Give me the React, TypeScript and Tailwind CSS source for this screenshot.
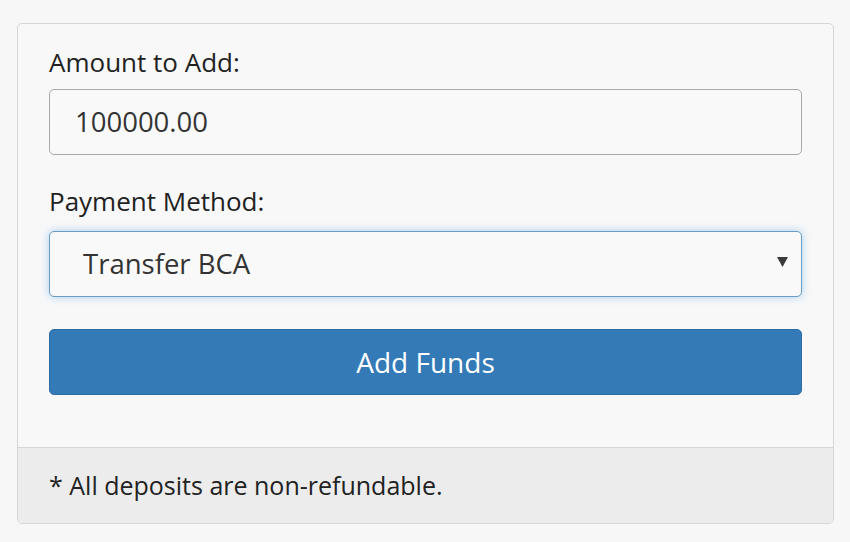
export default function App() {
  return (
    <div className="min-h-[542px] bg-[#f7f7f7] pt-[23px] pl-[17px] pr-[16px] pb-[18px] font-['Open_Sans',sans-serif]">
      <div className="border border-[#d6d6d6] rounded-[5px] bg-[#f8f8f8] overflow-hidden">
        <div className="px-[31px] pt-[20px] pb-[52px]">
          <label className="block text-[26px] leading-[36px] text-[#222] mb-[9px]">Amount to Add:</label>
          <div className="h-[66px] border border-[#a9a9a9] rounded-[5px] bg-[#f9f9f9] flex items-center pl-[25px] text-[27.5px] text-[#333]">
            100000.00
          </div>
          <label className="block text-[26px] leading-[36px] text-[#222] mt-[28px] mb-[12px]">Payment Method:</label>
          <div className="h-[66px] border border-[#6a9cc4] rounded-[5px] bg-[#f9f9f9] flex items-center justify-between pl-[33px] pr-[13px] text-[27.5px] text-[#333] shadow-[0_0_8px_rgba(102,175,233,0.55)]">
            <span>Transfer BCA</span>
            <svg width="11" height="10" viewBox="0 0 11 10" className="mt-[-4px]">
              <path d="M0 0 H11 L5.5 10 Z" fill="#3a3a3a" />
            </svg>
          </div>
          <button className="mt-[32px] w-full h-[66px] bg-[#337ab7] border border-[#2e6da4] rounded-[5px] text-white text-[28px]">
            Add Funds
          </button>
        </div>
        <div className="border-t border-[#d6d6d6] bg-[#ececec] h-[76px] flex items-center px-[31px] text-[25px] text-[#222]">
          * All deposits are non-refundable.
        </div>
      </div>
    </div>
  );
}
